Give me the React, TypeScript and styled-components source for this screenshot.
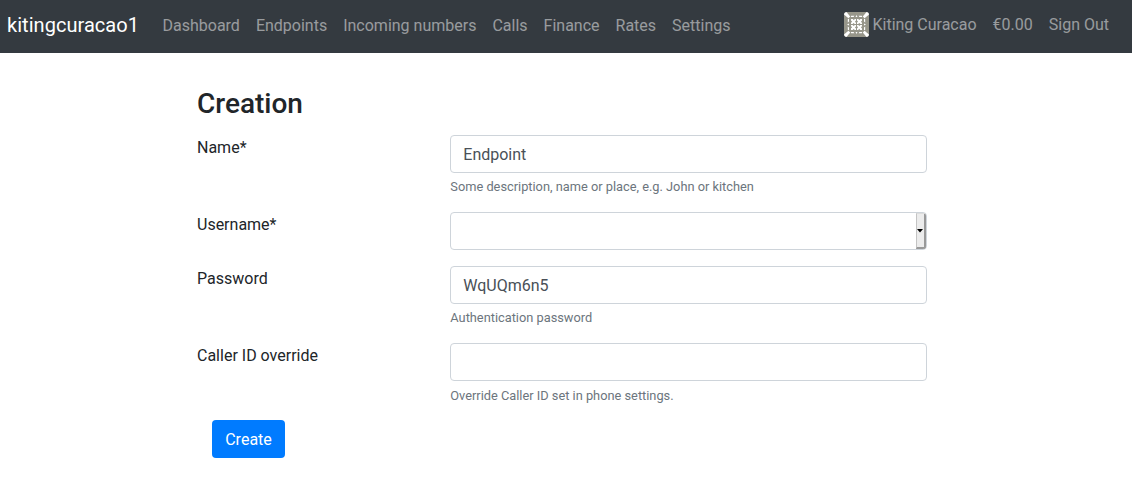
import React from "react";
import styled, { createGlobalStyle } from "styled-components";

const GlobalStyle = createGlobalStyle`
  *, *::before, *::after { box-sizing: border-box; }
  body {
    margin: 0;
    background: #fff;
    color: #212529;
    font: 400 16px/1.5 Roboto, "Liberation Sans", sans-serif;
  }
`;

const Navbar = styled.nav`
  display: flex;
  align-items: flex-start;
  height: 53px;
  padding: 10px 15px 0 7px;
  background: #343a40;
  white-space: nowrap;
`;

const Brand = styled.a`
  margin-right: 15.5px;
  font-size: 20px;
  letter-spacing: 0.04px;
  line-height: 30px;
  color: #fff;
`;

const NavList = styled.ul<{ $end?: boolean }>`
  display: flex;
  list-style: none;
  margin: ${(p) => (p.$end ? "2px 0 0 auto" : "3px 0 0")};
  padding: 0;
`;

const NavItem = styled.li`
  display: flex;
  align-items: center;
  height: 25px;
  padding: 0 8px;
  color: rgba(255, 255, 255, 0.5);
`;

const Avatar = styled.svg`
  width: 25px;
  height: 25px;
  margin-right: 3.5px;
  border-radius: 3px;
`;

const Main = styled.main`
  width: 730px;
  margin: 34px 0 0 197px;
`;

const Title = styled.h1`
  margin: 0 0 14px;
  font-size: 28px;
  font-weight: 500;
  line-height: 34px;
`;

const FormRow = styled.div`
  display: grid;
  grid-template-columns: 253.3px 476.7px;
  margin-bottom: 16px;

  &:last-of-type {
    margin-bottom: 14.4px;
  }
`;

const Label = styled.label`
  padding-top: 1px;
`;

const Input = styled.input`
  display: block;
  width: 100%;
  height: 38px;
  padding: 6px 12px;
  border: 1px solid #ced4da;
  border-radius: 4px;
  font: inherit;
  color: #495057;
  background: #fff;
`;

const Help = styled.small`
  display: block;
  margin-top: 4px;
  font-size: 12.8px;
  line-height: 19.2px;
  color: #6c757d;

  ${FormRow}:last-of-type & {
    margin-top: 5px;
  }
`;

const Select = styled.div`
  display: flex;
  justify-content: flex-end;
  height: 38px;
  border: 1px solid #ced4da;
  border-radius: 4px;
  overflow: hidden;
`;

const SelectHandle = styled.span`
  display: flex;
  align-items: center;
  justify-content: center;
  width: 10px;
  border: 1px solid #ddd;
  border-left-color: #c4c4c4;
  border-right: 2px solid #999;
  border-bottom: 2px solid #999;
  background: #ececec;
`;

const Arrow = styled.svg`
  flex: none;
  width: 6px;
  height: 4px;
`;

const Button = styled.button`
  display: block;
  width: 73px;
  height: 38px;
  margin-left: 15px;
  padding: 2px 0 0;
  border: 0;
  border-radius: 4px;
  background: #007bff;
  color: #fff;
  font: inherit;
`;

const quarterTurns = [0, 90, 180, 270];

function Identicon() {
  return (
    <Avatar viewBox="0 0 25 25">
      <rect width="25" height="25" fill="#97968a" />
      {quarterTurns.map((a) => (
        <g key={a} transform={`rotate(${a} 12.5 12.5)`} fill="#fff">
          <path d="M0 0H2.5L6.2 4.4L4.4 6.2L0 2.5z" />
          <path d="M3.8 7.2L5 6.8V9.6L3.8 10.4zM7.2 3.8L6.8 5H9.6L10.4 3.8zM3 12.5L5 11.5V13.5z" />
          <path d="M7 7h1.8l1 1.2L10.8 7h1.2v1.6l-1.1 1.1L12 10.8V12h-1.4l-.9-1.1L8.6 12H7v-1.2l1.1-1.1L7 8.6z" />
        </g>
      ))}
    </Avatar>
  );
}

export default function App() {
  return (
    <>
      <GlobalStyle />
      <Navbar>
        <Brand>kitingcuracao1</Brand>
        <NavList>
          {["Dashboard", "Endpoints", "Incoming numbers", "Calls", "Finance", "Rates", "Settings"].map((t) => (
            <NavItem key={t}>{t}</NavItem>
          ))}
        </NavList>
        <NavList $end>
          <NavItem>
            <Identicon />
            Kiting Curacao
          </NavItem>
          <NavItem>€0.00</NavItem>
          <NavItem>Sign Out</NavItem>
        </NavList>
      </Navbar>
      <Main>
        <Title>Creation</Title>
        <FormRow>
          <Label>Name*</Label>
          <div>
            <Input defaultValue="Endpoint" />
            <Help>Some description, name or place, e.g. John or kitchen</Help>
          </div>
        </FormRow>
        <FormRow>
          <Label>Username*</Label>
          <Select>
            <SelectHandle>
              <Arrow viewBox="0 0 6 4"><path d="M0 0h6L3 3.5z" /></Arrow>
            </SelectHandle>
          </Select>
        </FormRow>
        <FormRow>
          <Label>Password</Label>
          <div>
            <Input defaultValue="WqUQm6n5" />
            <Help>Authentication password</Help>
          </div>
        </FormRow>
        <FormRow>
          <Label>Caller ID override</Label>
          <div>
            <Input />
            <Help>Override Caller ID set in phone settings.</Help>
          </div>
        </FormRow>
        <Button>Create</Button>
      </Main>
    </>
  );
}
